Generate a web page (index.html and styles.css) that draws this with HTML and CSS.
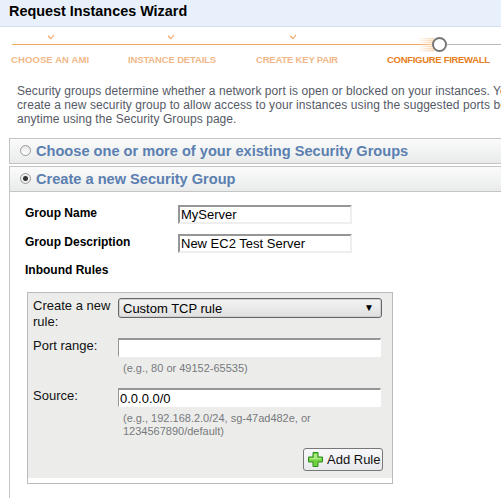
FILE: index.html
```html
<!DOCTYPE html>
<html lang="en">
<head>
  <meta charset="UTF-8">
  <title>Request Instances Wizard</title>
  <link rel="stylesheet" href="styles.css">
</head>
<body>

  <div class="wizard-title">Request Instances Wizard</div>

  <!-- Step indicator -->
  <div class="steps">
    <div class="step-checks">
      <svg class="check check-1" width="8" height="7" viewBox="0 0 8 7"><path d="M1 2 L4 4.5 L7 1 L7 3 L4 6.5 L1 4 Z" fill="#f0b57c"/></svg>
      <svg class="check check-2" width="8" height="7" viewBox="0 0 8 7"><path d="M1 2 L4 4.5 L7 1 L7 3 L4 6.5 L1 4 Z" fill="#f0b57c"/></svg>
      <svg class="check check-3" width="8" height="7" viewBox="0 0 8 7"><path d="M1 2 L4 4.5 L7 1 L7 3 L4 6.5 L1 4 Z" fill="#f0b57c"/></svg>
    </div>
    <div class="step-line">
      <div class="line-done"></div>
      <div class="step-glow"></div>
      <div class="step-dot"></div>
      <div class="line-todo"></div>
    </div>
    <div class="step-labels">
      <span class="step-label label-1">CHOOSE AN AMI</span>
      <span class="step-label label-2">INSTANCE DETAILS</span>
      <span class="step-label label-3">CREATE KEY PAIR</span>
      <span class="step-label step-current">CONFIGURE FIREWALL</span>
    </div>
  </div>

  <p class="intro">Security groups determine whether a network port is open or blocked on your instances. You may<br>create a new security group to allow access to your instances using the suggested ports below<br>anytime using the Security Groups page.</p>

  <!-- Existing groups -->
  <div class="section section-closed">
    <div class="section-head">
      <span class="radio"></span>
      <h2>Choose one or more of your existing Security Groups</h2>
    </div>
  </div>

  <!-- New group -->
  <div class="section section-open">
    <div class="section-head">
      <span class="radio radio-on"></span>
      <h2>Create a new Security Group</h2>
    </div>
    <div class="section-body">
      <div class="field-row">
        <label>Group Name</label>
        <input type="text" class="text-input" value="MyServer">
      </div>
      <div class="field-row">
        <label>Group Description</label>
        <input type="text" class="text-input" value="New EC2 Test Server">
      </div>
      <div class="rules-title">Inbound Rules</div>

      <div class="rule-panel">
        <div class="rule-inner">
          <div class="rule-row">
            <label>Create a new rule:</label>
            <div class="fake-select">Custom TCP rule<span class="arrow">&#9660;</span></div>
          </div>
          <div class="rule-row rule-port">
            <label>Port range:</label>
            <div>
              <input type="text" class="rule-input">
              <div class="hint">(e.g., 80 or 49152-65535)</div>
            </div>
          </div>
          <div class="rule-row rule-source">
            <label>Source:</label>
            <div>
              <input type="text" class="rule-input" value="0.0.0.0/0">
              <div class="hint">(e.g., 192.168.2.0/24, sg-47ad482e, or<br>1234567890/default)</div>
            </div>
          </div>
          <div class="rule-actions">
            <button class="add-rule">
              <svg width="15" height="15" viewBox="0 0 15 15"><path d="M5 .5 H10 V5 H14.5 V10 H10 V14.5 H5 V10 H.5 V5 H5 Z" fill="#6fd13f" stroke="#2f8f1c"/><path d="M6 2 H9 V6 H6 Z M2 6 H13 V7.5 H2 Z" fill="#aeeb85"/></svg>
              <span>Add Rule</span>
            </button>
          </div>
        </div>
      </div>
    </div>
  </div>

</body>
</html>
```

FILE: styles.css
```css
html, body {
  margin: 0;
  padding: 0;
  height: 498px;
  overflow: hidden;
}
body {
  font-family: "Liberation Sans", Arial, sans-serif;
  background-color: #fff;
  color: #000;
}
.wizard-title {
  height: 26px;
  line-height: 23px;
  padding-left: 9px;
  font-size: 14.4px;
  font-weight: bold;
  background-color: #e8f0fb;
  border-bottom: 1px solid #d4dfee;
}

/* Step indicator */
.steps {
  height: 57px;
  padding-left: 12px;
}
.step-checks {
  display: flex;
  height: 17px;
  padding-top: 6px;
  box-sizing: border-box;
}
.check-1 { margin-left: 35px; }
.check-2 { margin-left: 112px; }
.check-3 { margin-left: 114px; }
.step-line {
  display: flex;
  align-items: center;
  height: 1px;
}
.line-done {
  width: 421px;
  height: 1px;
  background-color: #f0a860;
  flex: none;
}
.step-glow {
  width: 16px;
  height: 14px;
  margin-left: -15px;
  flex: none;
  background: repeating-linear-gradient(to bottom, #f8cfa6 0, #f8cfa6 1px, #fdeedd 1px, #fdeedd 2px);
  -webkit-mask-image: linear-gradient(to right, transparent, #000);
  mask-image: linear-gradient(to right, transparent, #000);
}
.step-dot {
  width: 11px;
  height: 11px;
  margin-left: -2px;
  flex: none;
  border: 2px solid #777;
  border-radius: 50%;
  background-color: #fff;
  position: relative;
}
.line-todo {
  flex: 1;
  height: 1px;
  background-color: #bbb;
}
.step-labels {
  display: flex;
  white-space: nowrap;
  margin-left: -1px;
  padding-top: 9px;
}
.step-label {
  font-size: 9.5px;
  font-weight: bold;
  color: #f0b888;
  letter-spacing: -0.3px;
}
.label-1 { width: 117px; letter-spacing: 0.1px; }
.label-2 { width: 128px; letter-spacing: -0.15px; }
.label-3 { width: 131px; letter-spacing: -0.2px; }
.step-current { color: #e67e22; }

.intro {
  margin: 0 0 0 17px;
  width: 520px;
  font-size: 12px;
  letter-spacing: 0.07px;
  line-height: 14px;
  color: #555a66;
  white-space: nowrap;
}

/* Accordion sections */
.section {
  margin-left: 9px;
  width: 520px;
  box-sizing: border-box;
  border: 1px solid #c4c4c4;
  border-right: none;
}
.section-closed { margin-top: 12px; }
.section-open {
  margin-top: 2px;
  height: 332px;
  border-bottom: none;
}
.section-head {
  display: flex;
  align-items: center;
  height: 24px;
  padding-left: 10px;
  background: linear-gradient(to bottom, #fbfbfb, #e9ebeb);
}
.section-open .section-head { border-bottom: 1px solid #c4c4c4; }
.section-head h2 {
  margin: 0 0 0 5px;
  font-size: 14.6px;
  font-weight: bold;
  color: #5b7fb0;
  white-space: nowrap;
}
.radio {
  width: 9px;
  height: 9px;
  flex: none;
  border: 1px solid #999;
  border-radius: 50%;
  background: linear-gradient(to bottom, #e6e6e6, #fff);
  margin-top: -2px;
}
.radio-on {
  background: radial-gradient(circle, #333 0, #333 2px, #eee 3px);
}
.section-body {
  padding: 13px 0 0 15px;
}
.field-row {
  display: flex;
  align-items: flex-start;
  margin-bottom: 10px;
}
.field-row label {
  width: 153px;
  margin-top: 1px;
  font-size: 12px;
  font-weight: bold;
  line-height: 14px;
  flex: none;
}
.text-input {
  width: 174px;
  height: 19px;
  margin: 0;
  padding: 0 1px;
  box-sizing: border-box;
  font-family: "Liberation Sans", Arial, sans-serif;
  font-size: 13px;
  border: 2px solid;
  border-color: #969696 #eee #eee #969696;
  background-color: #fff;
  outline: none;
}
.rules-title {
  font-size: 12px;
  font-weight: bold;
  line-height: 14px;
  margin-top: 1px;
}

/* Rule panel */
.rule-panel {
  width: 366px;
  margin: 15px 0 0 2px;
  box-sizing: border-box;
  border: 1px solid #bbb;
  padding-bottom: 5px;
  background-color: #fff;
}
.rule-inner {
  background-color: #ecedeb;
  height: 185px;
  padding: 5px 10px 0 5px;
  box-sizing: border-box;
}
.rule-row {
  display: flex;
  align-items: flex-start;
  font-size: 13px;
}
.rule-row label {
  width: 85px;
  flex: none;
  line-height: 16px;
  color: #111;
}
.fake-select {
  width: 264px;
  height: 20px;
  line-height: 19px;
  box-sizing: border-box;
  padding-left: 4px;
  position: relative;
  border: 1px solid #666;
  border-radius: 3px;
  box-shadow: inset 0 0 0 1px #d0d0d0;
  background: linear-gradient(to bottom, #f4f4f4, #dfe0df);
  flex: none;
}
.arrow {
  position: absolute;
  right: 7px;
  top: -1px;
  font-size: 10px;
}
.rule-input {
  display: block;
  width: 263px;
  height: 19px;
  padding: 0 1px;
  box-sizing: border-box;
  font-family: "Liberation Sans", Arial, sans-serif;
  font-size: 13px;
  border: 2px solid;
  border-color: #969696 #fff #fff #969696;
  border-width: 2px 1px 1px 1px;
  background-color: #fff;
  outline: none;
}
.rule-port { margin-top: 8px; }
.rule-source { margin-top: 13px; }
.hint {
  font-size: 11px;
  line-height: 13px;
  color: #77797d;
  margin: 5px 0 0 5px;
  width: 258px;
}
.rule-actions {
  display: flex;
  justify-content: flex-end;
  margin-top: 10px;
}
.add-rule {
  display: flex;
  align-items: center;
  gap: 4px;
  width: 80px;
  height: 23px;
  padding: 0 0 0 4px;
  margin-right: -1px;
  box-sizing: border-box;
  font-family: "Liberation Sans", Arial, sans-serif;
  font-size: 13px;
  white-space: nowrap;
  color: #111;
  border: 1px solid #777;
  border-radius: 3px;
  background: linear-gradient(to bottom, #f8f8fa, #e8e9ec);
}
```
